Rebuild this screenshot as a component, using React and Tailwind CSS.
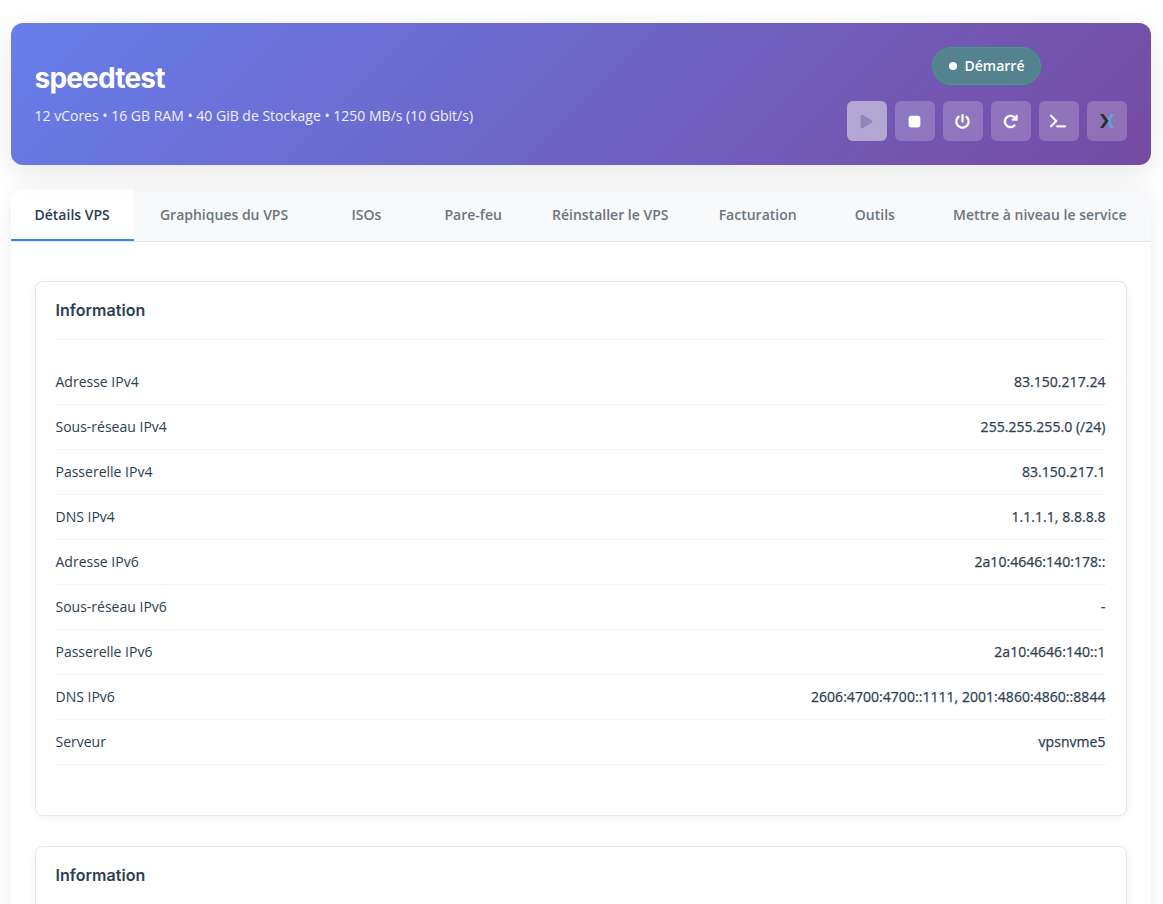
import React, { useState } from "react";
import {
  FaPlay,
  FaStop,
  FaPowerOff,
  FaArrowRotateRight,
  FaTerminal,
} from "react-icons/fa6";

const tabs = [
  "Détails VPS",
  "Graphiques du VPS",
  "ISOs",
  "Pare-feu",
  "Réinstaller le VPS",
  "Facturation",
  "Outils",
  "Mettre à niveau le service",
];

const network = [
  ["Adresse IPv4", "83.150.217.24"],
  ["Sous-réseau IPv4", "255.255.255.0 (/24)"],
  ["Passerelle IPv4", "83.150.217.1"],
  ["DNS IPv4", "1.1.1.1, 8.8.8.8"],
  ["Adresse IPv6", "2a10:4646:140:178::"],
  ["Sous-réseau IPv6", "-"],
  ["Passerelle IPv6", "2a10:4646:140::1"],
  ["DNS IPv6", "2606:4700:4700::1111, 2001:4860:4860::8844"],
  ["Serveur", "vpsnvme5"],
];

function ConsoleLogo() {
  return (
    <svg width="14" height="14" viewBox="0 0 14 14" className="ml-0.5">
      <path d="M10.4 0H14L9.9 7L14 14H10.4L6.8 7Z" fill="#5fa3d8" />
      <path d="M0 0H3.4L8.6 7L3.4 14H0L4.9 7Z" fill="#2f2f33" />
    </svg>
  );
}

function ActionButton({ children, disabled, label }) {
  return (
    <button
      aria-label={label}
      disabled={disabled}
      className={`w-10 h-10 rounded-md pr-px flex items-center justify-center text-[15px] [&>svg]:stroke-[14] ${
        disabled ? "bg-[#b3a8d3] text-[#9184b8]" : "bg-white/20 text-white"
      }`}
    >
      {children}
    </button>
  );
}

function InfoCard({ title, rows }) {
  return (
    <section className="border border-[#e5e7eb] rounded-lg bg-white p-5 pb-[50px] shadow-[0_2px_8px_rgba(0,0,0,0.06)]">
      <h2 className="h-[38px] border-b border-[#f1f3f4] font-['Inter'] text-base leading-4 font-semibold tracking-[0.05px]">
        {title}
      </h2>
      <div className="pt-5">
        {rows.map(([name, value]) => (
          <div
            key={name}
            className="h-[45px] flex items-center justify-between border-b border-[#f1f3f4]"
          >
            <span>{name}</span>
            <span className="font-medium tracking-[0.04px] [-webkit-text-stroke:0.25px]">
              {value}
            </span>
          </div>
        ))}
      </div>
    </section>
  );
}

export default function App() {
  const [active, setActive] = useState(tabs[0]);

  return (
    <div className="h-screen overflow-hidden bg-white pt-[23px] pl-[10.5px] pr-[12.5px] font-['Open_Sans',sans-serif] text-sm text-[#2c3e50]">
      <header className="relative h-[142px] rounded-xl px-6 flex items-center justify-between text-white bg-[linear-gradient(135deg,#667eea_0%,#764ba2_100%)] shadow-[0_8px_32px_rgba(0,0,0,0.1)]">
        <div>
          <h1 className="font-['Inter'] font-bold text-[28px] leading-[30px] tracking-[-0.8px] mb-3">
            speedtest
          </h1>
          <p className="text-white/90 leading-[21px]">
            12 vCores • 16 GB RAM • 40 GiB de Stockage • 1250 MB/s (10 Gbit/s)
          </p>
        </div>

        <div className="flex flex-col items-center gap-4">
          <div className="h-[38px] px-[15.5px] flex items-center gap-2 rounded-full border border-[#32a679] bg-[#54838f] font-semibold">
            <span className="w-2 h-2 rounded-full bg-white" />
            Démarré
          </div>
          <div className="flex gap-2">
            <ActionButton label="Démarrer" disabled>
              <FaPlay />
            </ActionButton>
            <ActionButton label="Arrêter">
              <FaStop />
            </ActionButton>
            <ActionButton label="Éteindre">
              <FaPowerOff />
            </ActionButton>
            <ActionButton label="Redémarrer">
              <FaArrowRotateRight />
            </ActionButton>
            <ActionButton label="Terminal">
              <FaTerminal className="text-base" />
            </ActionButton>
            <ActionButton label="Console">
              <ConsoleLogo />
            </ActionButton>
          </div>
        </div>
      </header>

      <main className="mt-6 rounded-xl bg-white shadow-[0_4px_20px_rgba(0,0,0,0.08)]">
        <nav className="h-[53px] flex justify-between rounded-t-xl overflow-hidden bg-[#f8f9fb] border-b border-[#e5e7eb]">
          {tabs.map((tab) => (
            <button
              key={tab}
              onClick={() => setActive(tab)}
              className={`min-w-[104px] px-6 pt-0.5 border-b-2 font-semibold whitespace-nowrap ${
                tab === active
                  ? "bg-white border-[#3b82f6] text-[#2c3e50]"
                  : "border-transparent text-[#6c757d]"
              }`}
            >
              {tab}
            </button>
          ))}
        </nav>

        <div className="px-6 pt-[39px] flex flex-col gap-[30px]">
          <InfoCard title="Information" rows={network} />
          <InfoCard title="Information" rows={[]} />
        </div>
      </main>
    </div>
  );
}
